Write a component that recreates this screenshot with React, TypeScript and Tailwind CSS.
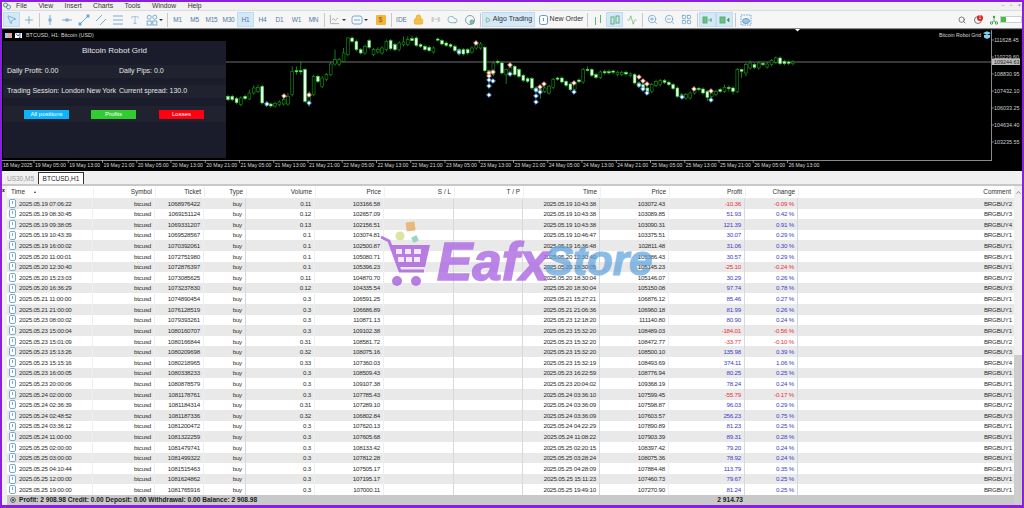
import React from "react";
import { MousePointer2, Plus, Type, ZoomIn, ZoomOut, LayoutGrid, Search, Lock, Cloud, Play, ChevronUp, LineChart, Activity } from "lucide-react";

type C = [string, number, number, number?, number?];
const candles: C[] = [
["w",205,215],["w",205,215],["w",212,224],["h",210,230],["w",205,212],["h",195,213,185,216],["h",180,195,172],["h",178,190,170],["w",175,225],["w",225,232],
["w",228,234],["h",226,234],["h",222,230],["h",215,228,200],["h",205,228,195],["h",130,200,115,205],["w",128,131,115,140],["w",128,131,100,140],["w",125,220],["h",197,220,190,236],
["h",145,200,140,205],["w",145,160],["h",150,175],["h",140,155,135],["h",108,140,100],["h",95,108,65],["h",95,110],["h",75,100,60,102],["h",30,80,28],["w",30,40],
["w",40,65],["w",65,75],["h",55,75],["w",38,58],["h",65,80],["h",65,72,58],["h",60,75],["h",40,65],["w",38,62],["w",50,65],
["h",45,65],["h",42,50,25],["h",35,50,25],["w",32,38,22,40],["w",30,52],["w",50,55],["w",55,65],["w",58,68],["h",60,72],["w",33,36,28,40],
["w",38,48],["w",45,52],["w",50,55],["w",55,68],["w",65,78],["w",65,78],["w",65,75],["h",60,72],["h",48,60],["h",48,60,42],
["w",58,128],["h",128,145,125,180],["h",105,140],["w",100,102,95,110],["w",105,135],["h",125,140,122,168],["h",118,140,108],["w",115,140],["w",125,145],["w",142,157],
["w",152,160],["w",152,180],["w",180,190],["h",185,195,180,212],["h",180,190,175],["h",175,195],["h",155,178],["w",150,153,146,158],["w",150,162],["w",160,172],
["w",168,185],["h",165,185,160,195],["w",156,161],["h",125,162],["w",124,127,115,130],["w",125,142],["w",140,148],["h",132,148],["w",131,134,125,140],["w",131,134,125,140],
["w",129,132,125,138],["h",133,140],["h",133,140],["w",133,138],["h",138,143],["w",140,165],["w",165,175],["w",170,185],["w",180,190],["h",170,190],
["h",160,172],["h",158,170],["w",158,163],["w",163,170],["w",170,182],["w",180,205],["h",200,208],["h",200,210,195],["h",195,210],["h",185,195,175],
["w",181,184,176,190],["w",183,195],["w",190,208,185,220],["h",195,205],["h",190,200],["w",185,190],["h",178,190,170],["w",178,182,172,190],["w",180,190,175,200],["h",125,190],
["w",125,130,122,150],["h",110,135,105,145],["h",105,120,98,125],["w",110,118],["h",105,120],["w",106,110,102,114],["h",108,117],["h",98,110],["h",90,103,85],["w",90,107],
["w",100,107],["w",102,106],["h",102,107]];

const red: [number, number][] = [[284,96],[309,95],[476,43],[489,73],[489,76],[493,72],[510,65],[540,87],[544,84],[574,83],[639,77],[643,81],[647,84],[694,89],[711,91]];
const blue: [number, number][] = [[267,104],[309,103],[459,52],[489,80],[489,86],[489,95],[493,81],[510,74],[536,90],[536,96],[536,102],[540,92],[574,92],[639,85],[643,89],[647,93],[682,97],[711,100]];

const times = ["19 May 05:00","19 May 13:00","19 May 21:00","20 May 05:00","20 May 13:00","20 May 21:00","21 May 05:00","21 May 13:00","21 May 21:00","22 May 05:00","22 May 13:00","22 May 21:00","23 May 05:00","23 May 13:00","23 May 21:00","24 May 05:00","24 May 13:00","24 May 21:00","25 May 05:00","25 May 13:00","25 May 21:00","26 May 05:00","26 May 13:00"];
const prices: [string, number][] = [["111628.45",42],["110229.60",59],["108830.95",76],["107432.10",93],["106033.25",110],["104634.40",127],["103235.55",144]];

const rows: string[][] = [
["2025.05.19 07:06:22","1068976422","0.11","103166.58","2025.05.19 10:43:38","103072.43","-10.36","-0.09 %","BRGBUY2"],
["2025.05.19 08:30:45","1069151124","0.12","102657.09","2025.05.19 10:43:38","103089.85","51.93","0.42 %","BRGBUY3"],
["2025.05.19 09:38:05","1069331207","0.13","102156.51","2025.05.19 10:43:38","103090.31","121.39","0.91 %","BRGBUY4"],
["2025.05.19 10:43:39","1069528567","0.1","103074.81","2025.05.19 10:46:47","103375.51","30.07","0.29 %","BRGBUY1"],
["2025.05.19 16:00:02","1070392061","0.1","102500.87","2025.05.19 16:36:48","102811.48","31.06","0.30 %","BRGBUY1"],
["2025.05.20 11:00:01","1072751980","0.1","105080.71","2025.05.20 12:30:40","105386.43","30.57","0.29 %","BRGBUY1"],
["2025.05.20 12:30:40","1072876397","0.1","105396.23","2025.05.20 18:30:05","105145.23","-25.10","-0.24 %","BRGBUY1"],
["2025.05.20 15:23:03","1073085625","0.11","104870.70","2025.05.20 18:30:04","105146.07","30.29","0.26 %","BRGBUY2"],
["2025.05.20 16:36:29","1073237830","0.12","104335.54","2025.05.20 18:30:04","105150.08","97.74","0.78 %","BRGBUY3"],
["2025.05.21 11:00:00","1074890454","0.3","106591.25","2025.05.21 15:27:21","106876.12","85.46","0.27 %","BRGBUY1"],
["2025.05.21 21:00:00","1076128519","0.3","106686.89","2025.05.21 21:06:36","106960.18","81.99","0.26 %","BRGBUY1"],
["2025.05.23 08:00:02","1079393261","0.3","110871.13","2025.05.23 12:18:20","111140.80","80.90","0.24 %","BRGBUY1"],
["2025.05.23 15:00:04","1080160707","0.3","109102.38","2025.05.23 15:32:20","108489.03","-184.01","-0.56 %","BRGBUY1"],
["2025.05.23 15:01:09","1080166844","0.31","108581.72","2025.05.23 15:32:20","108472.77","-33.77","-0.10 %","BRGBUY2"],
["2025.05.23 15:13:26","1080209698","0.32","108075.16","2025.05.23 15:32:20","108500.10","135.98","0.39 %","BRGBUY3"],
["2025.05.23 15:15:16","1080218965","0.33","107360.03","2025.05.23 15:32:19","108493.69","374.11","1.06 %","BRGBUY4"],
["2025.05.23 16:00:05","1080338233","0.3","108509.43","2025.05.23 16:22:59","108776.94","80.25","0.25 %","BRGBUY1"],
["2025.05.23 20:00:06","1080878579","0.3","109107.38","2025.05.23 20:04:02","109368.19","78.24","0.24 %","BRGBUY1"],
["2025.05.24 02:00:00","1081178761","0.3","107785.43","2025.05.24 03:36:10","107599.45","-55.79","-0.17 %","BRGBUY1"],
["2025.05.24 02:36:39","1081184314","0.31","107289.10","2025.05.24 03:36:09","107598.87","96.03","0.29 %","BRGBUY2"],
["2025.05.24 02:48:52","1081187336","0.32","106802.84","2025.05.24 03:36:09","107603.57","256.23","0.75 %","BRGBUY3"],
["2025.05.24 03:36:12","1081200472","0.3","107620.13","2025.05.24 04:22:29","107890.89","81.23","0.25 %","BRGBUY1"],
["2025.05.24 11:00:00","1081322259","0.3","107605.68","2025.05.24 11:08:22","107903.39","89.31","0.28 %","BRGBUY1"],
["2025.05.25 02:00:00","1081479741","0.3","108133.42","2025.05.25 02:20:15","108397.42","79.20","0.24 %","BRGBUY1"],
["2025.05.25 03:00:00","1081499322","0.3","107812.28","2025.05.25 03:28:24","108075.36","78.92","0.24 %","BRGBUY1"],
["2025.05.25 04:10:44","1081515463","0.3","107505.17","2025.05.25 04:28:09","107884.48","113.79","0.35 %","BRGBUY1"],
["2025.05.25 12:00:00","1081624862","0.3","107195.17","2025.05.25 15:11:23","107460.73","79.67","0.25 %","BRGBUY1"],
["2025.05.25 19:00:00","1081765916","0.3","107000.11","2025.05.25 19:49:10","107270.90","81.24","0.25 %","BRGBUY1"],
];

const grid = "grid grid-cols-[86px_62px_49px_42px_69px_69px_70px_69px_77px_69px_76px_53px_216px]";

function Btn({ children, active, w = "w-[17px]" }: { children: React.ReactNode; active?: boolean; w?: string }) {
  return <div className={`${w} h-[15px] flex items-center justify-center shrink-0 ${active ? "bg-[#d4e8f7] border border-[#c0dcf2]" : ""}`}>{children}</div>;
}
const Sep = () => <div className="w-px h-[14px] bg-[#c8c8c8] mx-[1.5px] shrink-0" />;
const Caret = () => <div className="w-0 h-0 border-x-[2px] border-x-transparent border-t-[2px] border-t-[#333] shrink-0 ml-[-1px] mr-[2px]" />;
const Tf = ({ t, active }: { t: string; active?: boolean }) => <Btn active={active}><span className="text-[6.5px] text-[#4d7ba8] tracking-[-0.2px]">{t}</span></Btn>;
const Ic = ({ children, c = "#6aa5d2" }: { children: React.ReactNode; c?: string }) => (
  <svg width="12" height="12" viewBox="0 0 12 12" fill="none" stroke={c} strokeWidth="0.9">{children}</svg>
);

function Chart() {
  return (
    <svg width="1020" height="143" viewBox="2 28 1020 143" className="block">
      <rect x="2" y="28" width="1020" height="143" fill="#000" />
      <rect x="2" y="28" width="1020" height="1.2" fill="#8a8a8a" />
      <path d="M795 29h5l-2.5 2.5z" fill="#fff" />
      <line x1="226" y1="62" x2="991" y2="62" stroke="#8c8c8c" strokeWidth="0.8" />
      {candles.map((c, i) => {
        const x = 228 + i * 4.28;
        const top = 28 + c[1] / 3, bot = 28 + c[2] / 3;
        const wt = 28 + (c[3] ?? c[1] - 5) / 3, wb = 28 + (c[4] ?? c[2] + 5) / 3;
        return (
          <g key={i}>
            <line x1={x} x2={x} y1={wt} y2={wb} stroke="#1aa01a" strokeWidth="0.8" />
            <rect x={x - 1.4} y={top} width="2.8" height={Math.max(bot - top, 1.2)} fill={c[0] === "w" ? "#eafff0" : "#000"} stroke={c[0] === "w" ? "#2fd02f" : "#159a15"} strokeWidth="0.6" />
          </g>
        );
      })}
      {red.map(([x, y], i) => <path key={i} d={`M${x} ${y - 2.3}L${x + 2.3} ${y}L${x} ${y + 2.3}L${x - 2.3} ${y}Z`} fill="#fff" stroke="#ef8a78" strokeWidth="1" />)}
      {blue.map(([x, y], i) => <path key={i} d={`M${x} ${y - 2.3}L${x + 2.3} ${y}L${x} ${y + 2.3}L${x - 2.3} ${y}Z`} fill="#fff" stroke="#4f9be8" strokeWidth="1" />)}
      <rect x="991" y="30" width="0.9" height="131" fill="#9a9a9a" />
      <rect x="2" y="160" width="990" height="0.9" fill="#9a9a9a" />
      {prices.map(([p, y]) => (
        <g key={p}>
          <line x1="991" x2="994" y1={y - 2} y2={y - 2} stroke="#aaa" strokeWidth="0.7" />
          <text x="994" y={y} fontSize="5.4" fill="#d0d0d0">{p}</text>
        </g>
      ))}
      <rect x="992" y="58.5" width="28" height="6.5" fill="#bdbdbd" />
      <text x="994" y="64" fontSize="5.4" fill="#222">109244.63</text>
      <text x="3" y="167" fontSize="5.1" fill="#d8d8d8">18 May 2025</text>
      {times.map((t, i) => {
        const x = 35 + i * 34.25;
        return (
          <g key={t}>
            <line x1={x - 1} x2={x - 1} y1="160" y2="163" stroke="#bbb" strokeWidth="0.7" />
            <text x={x} y="167" fontSize="5.1" fill="#d8d8d8">{t}</text>
          </g>
        );
      })}
      <rect x="5" y="33" width="7" height="5" fill="#e8a0a0" />
      <rect x="5" y="33" width="3" height="5" fill="#9fc6ea" />
      <rect x="15" y="33" width="7" height="5" fill="#fff" />
      <path d="M16 33.5l2 2.5l2-2.5v4h-1" stroke="#2a5aa0" strokeWidth="0.9" fill="none" />
      <text x="26" y="37" fontSize="5.4" fill="#d8d8d8">BTCUSD, H1:  Bitcoin (USD)</text>
      <text x="939" y="37" fontSize="5.2" fill="#d8d8d8">Bitcoin Robot Grid</text>
      <path d="M983 33l4 2l4-2l-4-1.8z M984 35v2.5l3 1.5l3-1.5V35" fill="#7fd4f5" />
    </svg>
  );
}

function Panel() {
  return (
    <div className="absolute left-[1px] top-[13px] w-[223px] h-[117px] bg-[#1a1c2b] text-[#e4e4e4] flex flex-col">
      <div className="h-[19px] flex items-center justify-center text-[8px]">Bitcoin Robot Grid</div>
      <div className="mt-[5px] h-[13px] bg-[#20232f] flex items-center text-[7px] pl-[4px]">
        <span className="w-[112px]">Daily Profit: 0.00</span><span>Daily Pips:  0.0</span>
      </div>
      <div className="mt-[7px] h-[13px] bg-[#20232f] flex items-center text-[7px] pl-[4px]">
        <span className="w-[112px] whitespace-nowrap">Trading Session: London New York</span><span>Current spread: 130.0</span>
      </div>
      <div className="mt-[8px] h-[16px] bg-[#20232f] flex items-center text-[6px] text-white">
        <div className="ml-[21px] w-[45px] h-[9px] bg-[#0db4fb] flex items-center justify-center">All positions</div>
        <div className="ml-[22px] w-[45px] h-[9px] bg-[#31cc31] flex items-center justify-center">Profits</div>
        <div className="ml-[23px] w-[45px] h-[9px] bg-[#ff0010] flex items-center justify-center">Losses</div>
      </div>
    </div>
  );
}

function Watermark() {
  return (
    <div className="absolute left-[376px] top-[218px] flex items-end pointer-events-none">
      <svg width="56" height="76" viewBox="378 220 56 76" className="opacity-90">
        <rect x="406" y="222" width="9" height="9" rx="1" fill="#e9b36f" transform="rotate(-8 410 226)" />
        <circle cx="400" cy="236" r="4.5" fill="#d8e39a" />
        <rect x="412" y="236" width="6" height="6" rx="1" fill="#8fd3c0" transform="rotate(-25 415 239)" />
        <path d="M381 237l8 4l11 30h24" fill="none" stroke="#b06fe0" strokeWidth="3" />
        <path d="M390 245h40l-5 22h-28z" fill="#b06fe0" />
        <g fill="#f3e6fb">
          <rect x="396" y="249" width="6" height="5" /><rect x="405" y="249" width="6" height="5" /><rect x="414" y="249" width="7" height="5" />
          <rect x="398" y="257" width="6" height="5" /><rect x="406" y="257" width="6" height="5" /><rect x="414" y="257" width="6" height="5" />
        </g>
        <circle cx="397" cy="281" r="5" fill="#b06fe0" />
        <circle cx="416" cy="281" r="5" fill="#b06fe0" />
      </svg>
    </div>
  );
}

function Table() {
  return (
    <div className="flex-1 flex min-h-0 bg-white">
      <div className="w-[5px] bg-[#f0f0f0] text-[5px] leading-none pt-[2px] text-black relative shrink-0"><span className="font-bold">x</span></div>
      <div className="w-[1007px] flex flex-col shrink-0">
        <div className={`${grid} h-[12px] items-center text-[6.4px] text-[#333] bg-white`}>
          {["", "Symbol", "Ticket", "Type", "Volume", "Price", "S / L", "T / P", "Time", "Price", "Profit", "Change", "Comment"].map((h, i) =>
            i === 0 ? (
              <div key={i} className="pl-[4px] flex items-center gap-[9px]"><span>Time</span><span className="w-0 h-0 border-x-[1.5px] border-x-transparent border-b-[2px] border-b-[#333]" /></div>
            ) : (
              <div key={i} className="text-right pr-[3px] border-l border-[#f0f0f0]">{h}</div>
            )
          )}
        </div>
        {rows.map((r, i) => {
          const neg = r[6].startsWith("-");
          const pc = neg ? "text-[#e8303c]" : "text-[#3c3ccc]";
          const cell = `text-right pr-[3px] border-r border-[#d6dadd] h-full flex items-center justify-end`;
          return (
            <div key={i} className={`${grid} h-[10.7px] items-center text-[6.2px] tracking-[-0.22px] text-[#2c2c2c] ${i % 2 === 0 ? "bg-[#e9e9e9]" : "bg-white"}`}>
              <div className={`${cell} !justify-start gap-[3px] pl-[2px] border-r-[#eeeeee]`}>
                <svg width="7" height="9" viewBox="0 0 7 9" className="shrink-0"><rect x="0.5" y="0.5" width="6" height="8" rx="1.4" fill="#fff" stroke="#7aa6d0" /><line x1="3.5" y1="2" x2="3.5" y2="5" stroke="#7aa6d0" /></svg>
                <span className="whitespace-nowrap">{r[0]}</span>
              </div>
              <div className={`${cell} border-r-[#eeeeee]`}>btcusd</div>
              <div className={`${cell} border-r-[#eeeeee]`}>{r[1]}</div>
              <div className={`${cell} border-r-[#d6dadd]`}>buy</div>
              <div className={`${cell} border-r-[#eeeeee]`}>{r[2]}</div>
              <div className={`${cell} border-r-[#eeeeee]`}>{r[3]}</div>
              <div className={cell}></div>
              <div className={cell}></div>
              <div className={`${cell} whitespace-nowrap`}>{r[4]}</div>
              <div className={`${cell} border-r-[#eeeeee]`}>{r[5]}</div>
              <div className={`${cell} ${pc}`}>{r[6]}</div>
              <div className={`${cell} ${pc} border-r-[#cfd8e0]`}>{r[7]}</div>
              <div className="text-right pr-[2px]">{r[8]}</div>
            </div>
          );
        })}
        <div className="relative flex-1 bg-[#c9c9c9] flex items-center text-[6.6px] font-bold text-[#1c1c1c] whitespace-nowrap">
          <svg width="6" height="6" viewBox="0 0 6 6" className="ml-[3px] mr-[3px]"><circle cx="3" cy="3" r="2.4" fill="none" stroke="#333" strokeWidth="0.7" /><circle cx="3" cy="3" r="1" fill="#333" /></svg>
          <span>Profit: 2 908.98 Credit: 0.00 Deposit: 0.00 Withdrawal: 0.00 Balance: 2 908.98</span>
          <div className="absolute right-[271px]">2 914.73</div>
        </div>
      </div>
      <div className="flex-1 flex flex-col bg-[#f0f0f0]">
        <div className="h-[12px] flex items-center justify-center text-[#444]"><ChevronUp size={7} /></div>
        <div className="h-[157px]" />
        <div className="flex-1 bg-[#cdcdcd]" />
      </div>
    </div>
  );
}

export default function App() {
  return (
    <div className="relative w-[1024px] h-[508px] overflow-hidden bg-[#f0f0f0] border-x-2 border-t-2 border-b-[3px] border-[#8a1fe0] flex flex-col font-['Liberation_Sans',sans-serif]">
      <div className="h-[8px] flex items-center bg-[#f0f0f0] text-[6.8px] text-[#333] shrink-0">
        <svg width="8" height="8" viewBox="0 0 8 8" className="ml-[1px]"><circle cx="2.5" cy="3" r="2" fill="none" stroke="#3aa04a" /><circle cx="5.5" cy="5" r="2" fill="none" stroke="#5b8fc0" /></svg>
        <div className="ml-[5px] flex gap-[11.5px]">
          {["File", "View", "Insert", "Charts", "Tools", "Window", "Help"].map((m) => <span key={m}>{m}</span>)}
        </div>
        <div className="ml-auto mr-[1px] flex gap-[6px] text-[#777] text-[5px] items-center"><span>–</span><span>▫</span><span>×</span></div>
      </div>
      <div className="h-[18px] bg-[#f6f6f6] border-t border-[#dcdcdc] flex items-center pl-[1px] shrink-0">
        <Btn active><MousePointer2 size={11} color="#5a9bcc" strokeWidth={1.5} /></Btn>
        <Btn><Plus size={12} color="#5a9bcc" strokeWidth={1.5} /></Btn>
        <Sep />
        <Btn><Ic><line x1="6" y1="1" x2="6" y2="11" /><rect x="5" y="5" width="2" height="2" /></Ic></Btn>
        <Btn><Ic><line x1="1" y1="6" x2="11" y2="6" /><rect x="5" y="5" width="2" height="2" /></Ic></Btn>
        <Btn><Ic><line x1="2" y1="10" x2="10" y2="2" /><rect x="1" y="9" width="2" height="2" fill="#6aa5d2" /><rect x="9" y="1" width="2" height="2" fill="#6aa5d2" /></Ic></Btn>
        <Btn><Ic><line x1="1" y1="7" x2="7" y2="1" /><line x1="5" y1="11" x2="11" y2="5" /></Ic></Btn>
        <Btn><Ic><line x1="1" y1="2" x2="11" y2="2" /><line x1="1" y1="6" x2="11" y2="6" /><line x1="1" y1="10" x2="11" y2="10" /></Ic></Btn>
        <Btn><Type size={10} color="#6aa5d2" strokeWidth={1.4} /></Btn>
        <Btn><Ic><circle cx="3.2" cy="3.2" r="2" /><circle cx="8.8" cy="3.2" r="2" /><rect x="1.2" y="7" width="4" height="4" /><rect x="6.8" y="7" width="4" height="4" /></Ic></Btn>
        <Caret />
        <Sep />
        <Tf t="M1" /><Tf t="M5" /><Tf t="M15" /><Tf t="M30" /><Tf t="H1" active /><Tf t="H4" /><Tf t="D1" /><Tf t="W1" /><Tf t="MN" />
        <Sep />
        <Btn><LineChart size={11} color="#888" strokeWidth={1.4} /></Btn><Caret />
        <Btn><Ic><rect x="1" y="2" width="10" height="8" rx="2" /><line x1="3" y1="6" x2="9" y2="6" /></Ic></Btn><Caret />
        <div className="ml-[2px]"><Btn><div className="w-[10px] h-[10px] bg-[#f3b53a] rounded-[1px] text-[7px] leading-[10px] text-center text-[#8a5a10]">$</div></Btn></div>
        <Sep />
        <Btn><span className="text-[6.5px] text-[#4d7ba8]">IDE</span></Btn>
        <Btn><Lock size={11} color="#f0b030" fill="#f6c050" /></Btn>
        <Btn><span className="text-[6px] text-[#ccc]">▮▪▮</span></Btn>
        <Btn><Cloud size={11} color="#5aa0c4" strokeWidth={1.5} /></Btn>
        <Btn><Ic c="#6a9ab0"><circle cx="6" cy="6" r="4.5" /><circle cx="8" cy="8" r="2" fill="#8ac08a" /></Ic></Btn>
        <Sep />
        <Btn active w="w-[53px]"><Play size={6} color="#2a9a3a" className="mr-[2px]" /><span className="text-[7px] text-[#333]">Algo Trading</span></Btn>
        <div className="ml-[2px]"><Btn w="w-[48px]"><svg width="9" height="10" viewBox="0 0 9 10" className="mr-[2px]"><rect x="0.5" y="0.5" width="8" height="9" rx="2" fill="#fff" stroke="#5a9bcc" /><line x1="4.5" y1="3" x2="4.5" y2="6" stroke="#5a9bcc" /></svg><span className="text-[7px] text-[#333]">New Order</span></Btn></div>
        <Sep />
        <Btn><Ic c="#4fae6a"><line x1="3.5" y1="3" x2="3.5" y2="11" /><line x1="8.5" y1="1" x2="8.5" y2="9" /></Ic></Btn>
        <Btn active><Ic c="#4fae6a"><rect x="2" y="3" width="3" height="7" /><rect x="7" y="2" width="3" height="7" /></Ic></Btn>
        <Btn><Activity size={10} color="#4fae6a" strokeWidth={1.5} /></Btn>
        <Sep />
        <Btn><ZoomIn size={11} color="#5a9bcc" strokeWidth={1.5} /></Btn>
        <Btn><ZoomOut size={11} color="#5a9bcc" strokeWidth={1.5} /></Btn>
        <Btn><LayoutGrid size={11} color="#5a9bcc" strokeWidth={1.5} /></Btn>
        <Sep />
        <Btn active><Ic c="#4fae6a"><rect x="1" y="3" width="4" height="6" fill="#6fbf85" /><path d="M6 6h4M9 4v4" /></Ic></Btn>
        <Btn active><Ic c="#4fae6a"><rect x="1" y="3" width="5" height="6" fill="#6fbf85" /><path d="M10 4v4l-2-2z" fill="#2a6aa0" /></Ic></Btn>
        <Sep />
        <Btn><Ic c="#5a9bcc"><rect x="1" y="1" width="10" height="10" strokeDasharray="1.5 1" /><ellipse cx="6" cy="7" rx="3.5" ry="2.5" fill="#9cc8e8" /></Ic></Btn>
        <div className="ml-auto flex items-center">
          <Search size={8} color="#444" className="mr-[8px]" />
          <div className="relative w-[8px] h-[8px] rounded-full border border-[#777] mr-[8px]">
            <div className="absolute -top-[2px] left-[2px] w-[6px] h-[6px] rounded-full bg-[#e02020] text-white text-[4.5px] leading-[6px] text-center">1</div>
          </div>
          <svg width="8" height="10" viewBox="0 0 8 10" className="mr-[2px]"><circle cx="4" cy="2" r="1.2" fill="#3aa04a" /><circle cx="1.5" cy="8" r="1.2" fill="none" stroke="#3aa04a" /><circle cx="6.5" cy="8" r="1.2" fill="none" stroke="#3aa04a" /><path d="M4 3v3M2 7l2-1l2 1" stroke="#3aa04a" fill="none" strokeWidth="0.7" /></svg>
          <div className="w-[22px] h-[7px] border border-[#cfcfcf] bg-white"><div className="w-[5px] h-full bg-[#44c040]" /></div>
        </div>
      </div>
      <div className="relative h-[143px] shrink-0">
        <Chart />
        <Panel />
      </div>
      <div className="h-[13px] bg-[#f0f0f0] flex items-end pl-[1px] shrink-0 text-[6.5px]">
        <div className="w-[35px] h-[11px] flex items-center justify-center text-[#999]">US30,M5</div>
        <div className="w-[46px] h-[12px] bg-white border border-[#333] border-b-0 flex items-center justify-center text-[#222]">BTCUSD,H1</div>
      </div>
      <div className="h-[2px] bg-[#c8c8c8] shrink-0" />
      <Table />
      <Watermark />
      <div className="absolute left-[435px] top-[230px] font-bold italic text-[53px] leading-[60px] text-[#ae6ce4] [-webkit-text-stroke:1.5px_#ae6ce4] opacity-[0.82] whitespace-nowrap pointer-events-none">Eafx</div>
      <div className="absolute left-[543px] top-[234px] font-bold italic text-[42px] leading-[50px] text-[#5fa3dc] [-webkit-text-stroke:1.2px_#5fa3dc] opacity-[0.72] whitespace-nowrap pointer-events-none">Store</div>
    </div>
  );
}
